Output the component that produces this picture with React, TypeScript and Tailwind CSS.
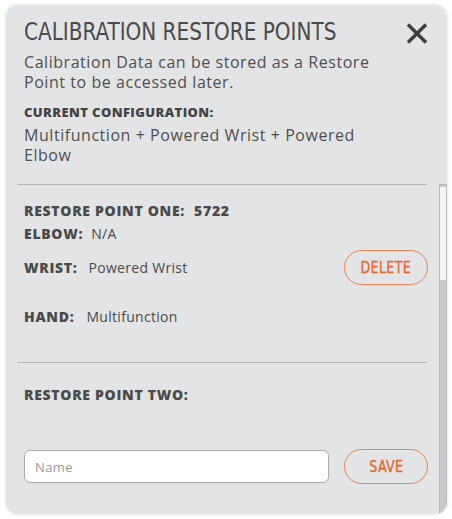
const body = { fontFamily: '"Open Sans", "Liberation Sans", sans-serif' };
const cond = { fontFamily: '"DejaVu Sans Condensed", "Liberation Sans Narrow", sans-serif' };

function PillButton({ label }: { label: string }) {
  return (
    <button
      type="button"
      style={cond}
      className="w-[84px] h-[35px] rounded-full border border-[#eb8250] text-[#e8652a] text-[16px] tracking-[0.4px]"
    >
      <span className="inline-block scale-x-[0.88] [-webkit-text-stroke:0.3px_#e8652a]">{label}</span>
    </button>
  );
}

function Field({ label, value, gap }: { label: string; value: string; gap: string }) {
  return (
    <div className={`flex items-center ${gap} text-[14px] text-[#4a4a4a]`}>
      <span className="font-extrabold tracking-[0.7px]">{label}</span>
      <span className="tracking-[0.3px]">{value}</span>
    </div>
  );
}

export default function App() {
  return (
    <div className="w-[452px] h-[519px] bg-white pt-[5px] pl-[6px]" style={body}>
      <div className="w-[441px] h-[509px] rounded-[12px] bg-[#e3e4e5] shadow-[0_0_4px_rgba(0,0,0,0.12)] flex flex-col overflow-hidden">
        <div className="pl-[18px] pr-[19px] pt-[11px] h-[179px] text-[#4f4f4f]">
          <div className="flex items-start justify-between">
            <h1 style={cond} className="text-[25px] leading-[32px] text-[#4a4a4a] whitespace-nowrap">
              <span className="inline-block origin-left scale-x-[0.89]">CALIBRATION RESTORE POINTS</span>
            </h1>
            <svg width="22" height="21" viewBox="0 0 22 21" className="mt-[7px]">
              <path d="M2 1.5 L20 19.5 M20 1.5 L2 19.5" stroke="#3d3d3d" strokeWidth="3.4" strokeLinecap="butt" />
            </svg>
          </div>
          <p className="text-[16px] leading-[20px] mt-[4px] tracking-[0.55px]">
            Calibration Data can be stored as a Restore
            <br />
            Point to be accessed later.
          </p>
          <div className="text-[13px] font-extrabold mt-[12px] leading-[16px] text-[#444] tracking-[0.4px]">
            CURRENT CONFIGURATION:
          </div>
          <p className="text-[16px] leading-[20px] mt-[5px] tracking-[0.55px]">
            Multifunction + Powered Wrist + Powered
            <br />
            Elbow
          </p>
        </div>
        <div className="flex flex-1 min-h-0">
          <div className="flex-1 flex flex-col">
            <div className="mx-[12px] border-t border-[#b4b5b7]" />
            <div className="pl-[18px] pr-[11px] pt-[17px]">
              <div className="flex items-center gap-[9px] text-[14px] font-extrabold text-[#4a4a4a] h-[16px] tracking-[0.7px]">
                <span>RESTORE POINT ONE:</span>
                <span>5722</span>
              </div>
              <div className="mt-[7px] h-[16px] flex items-center">
                <Field label="ELBOW:" value="N/A" gap="gap-[8px]" />
              </div>
              <div className="mt-[9px] flex items-center justify-between">
                <Field label="WRIST:" value="Powered Wrist" gap="gap-[11px]" />
                <PillButton label="DELETE" />
              </div>
              <div className="mt-[15px] h-[32px] flex items-center">
                <Field label="HAND:" value="Multifunction" gap="gap-[12px]" />
              </div>
            </div>
            <div className="mx-[12px] mt-[30px] border-t border-[#b4b5b7]" />
            <div className="pl-[18px] pr-[11px] pt-[23px]">
              <div className="text-[14px] font-extrabold text-[#4a4a4a] h-[16px] flex items-center tracking-[0.7px]">
                RESTORE POINT TWO:
              </div>
              <div className="mt-[47px] flex items-center justify-between">
                <input
                  placeholder="Name"
                  className="w-[305px] h-[33px] rounded-[6px] bg-white border border-[#a9aaac] px-[10px] text-[13px] tracking-[0.4px] placeholder:text-[#9a9a9a] outline-none"
                />
                <PillButton label="SAVE" />
              </div>
            </div>
          </div>
          <div className="w-[8px] bg-[#c8c9ca] border border-[#b9babb] flex flex-col">
            <div className="h-[93px] mt-[2px] bg-[#f3f4f5]" />
          </div>
        </div>
      </div>
    </div>
  );
}
